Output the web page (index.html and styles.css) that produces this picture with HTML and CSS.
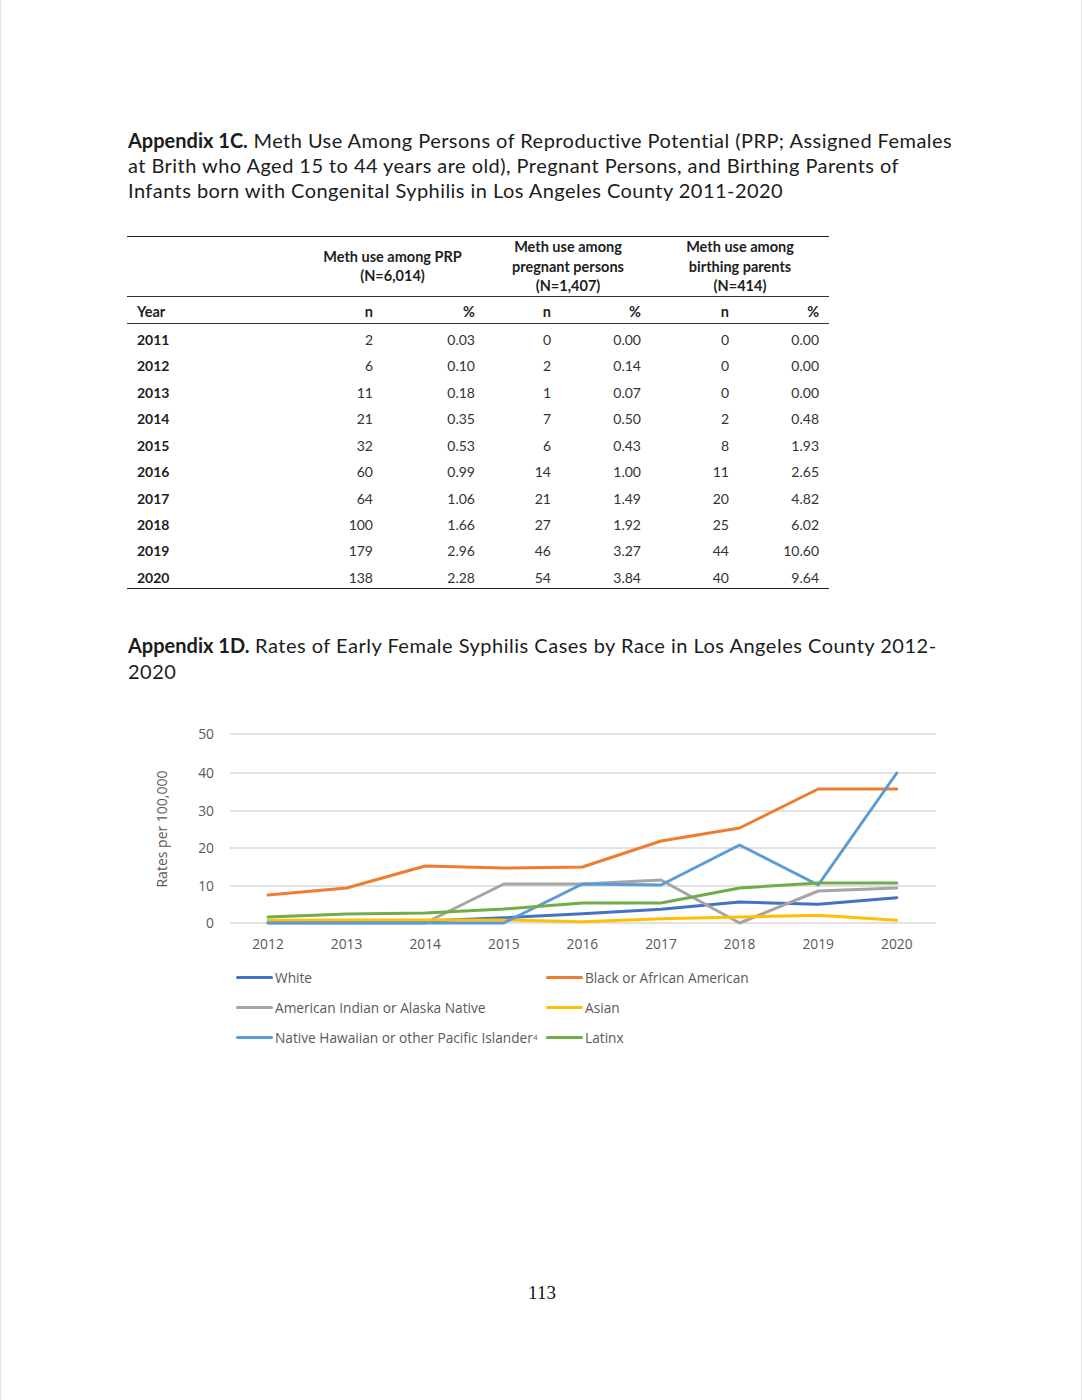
FILE: index.html
```html
<!DOCTYPE html>
<html lang="en">
<head>
<meta charset="utf-8">
<title>Appendix 1C / 1D</title>
<link rel="stylesheet" href="styles.css">
</head>
<body>
<div class="page">
  <h2 class="caption"><b>Appendix 1C.</b> Meth Use Among Persons of Reproductive Potential (PRP; Assigned Females<br>at Brith who Aged 15 to 44 years are old), Pregnant Persons, and Birthing Parents of<br>Infants born with Congenital Syphilis in Los Angeles County 2011-2020</h2>

  <table class="meth">
    <colgroup>
      <col class="c-year"><col class="c-n1"><col class="c-p1"><col class="c-n2"><col class="c-p2"><col class="c-n3"><col class="c-p3">
    </colgroup>
    <thead>
      <tr class="group">
        <th></th>
        <th colspan="2">Meth use among PRP<br>(N=6,014)</th>
        <th colspan="2">Meth use among<br>pregnant persons<br>(N=1,407)</th>
        <th colspan="2">Meth use among<br>birthing parents<br>(N=414)</th>
      </tr>
      <tr class="sub">
        <th class="year">Year</th><th>n</th><th>%</th><th>n</th><th>%</th><th>n</th><th>%</th>
      </tr>
    </thead>
    <tbody>
      <tr><th class="year">2011</th><td>2</td><td>0.03</td><td>0</td><td>0.00</td><td>0</td><td>0.00</td></tr>
      <tr><th class="year">2012</th><td>6</td><td>0.10</td><td>2</td><td>0.14</td><td>0</td><td>0.00</td></tr>
      <tr><th class="year">2013</th><td>11</td><td>0.18</td><td>1</td><td>0.07</td><td>0</td><td>0.00</td></tr>
      <tr><th class="year">2014</th><td>21</td><td>0.35</td><td>7</td><td>0.50</td><td>2</td><td>0.48</td></tr>
      <tr><th class="year">2015</th><td>32</td><td>0.53</td><td>6</td><td>0.43</td><td>8</td><td>1.93</td></tr>
      <tr><th class="year">2016</th><td>60</td><td>0.99</td><td>14</td><td>1.00</td><td>11</td><td>2.65</td></tr>
      <tr><th class="year">2017</th><td>64</td><td>1.06</td><td>21</td><td>1.49</td><td>20</td><td>4.82</td></tr>
      <tr><th class="year">2018</th><td>100</td><td>1.66</td><td>27</td><td>1.92</td><td>25</td><td>6.02</td></tr>
      <tr><th class="year">2019</th><td>179</td><td>2.96</td><td>46</td><td>3.27</td><td>44</td><td>10.60</td></tr>
      <tr><th class="year">2020</th><td>138</td><td>2.28</td><td>54</td><td>3.84</td><td>40</td><td>9.64</td></tr>
    </tbody>
  </table>

  <h2 class="caption caption-d"><b>Appendix 1D.</b> Rates of Early Female Syphilis Cases by Race in Los Angeles County 2012-<br>2020</h2>

  <svg class="chart" width="820" height="240" viewBox="0 0 820 240" xmlns="http://www.w3.org/2000/svg">
    <g class="grid" stroke="#d9d9d9" stroke-width="1.3">
      <line x1="101" y1="13" x2="807" y2="13"/>
      <line x1="101" y1="52" x2="807" y2="52"/>
      <line x1="101" y1="90" x2="807" y2="90"/>
      <line x1="101" y1="127" x2="807" y2="127"/>
      <line x1="101" y1="165" x2="807" y2="165"/>
      <line x1="101" y1="202" x2="807" y2="202"/>
    </g>
    <g class="ylab" text-anchor="end">
      <text x="85" y="18">50</text>
      <text x="85" y="57">40</text>
      <text x="85" y="95">30</text>
      <text x="85" y="132">20</text>
      <text x="85" y="170">10</text>
      <text x="85" y="207">0</text>
    </g>
    <text class="ytitle" transform="translate(38 108) rotate(-90)" text-anchor="middle">Rates per 100,000</text>
    <g class="xlab" text-anchor="middle">
      <text x="139" y="228">2012</text>
      <text x="217.6" y="228">2013</text>
      <text x="296.2" y="228">2014</text>
      <text x="374.8" y="228">2015</text>
      <text x="453.4" y="228">2016</text>
      <text x="532" y="228">2017</text>
      <text x="610.6" y="228">2018</text>
      <text x="689.2" y="228">2019</text>
      <text x="767.8" y="228">2020</text>
    </g>
    <g fill="none" stroke-width="3" stroke-linejoin="round" stroke-linecap="round">
      <polyline stroke="#4472c4" points="139,201.5 217.6,200.5 296.2,200 374.8,196.7 453.4,192.7 532,188.3 610.6,181 689.2,183.3 767.8,176.7"/>
      <polyline stroke="#ed7d31" points="139,174 217.6,167 296.2,145 374.8,147 453.4,146 532,120 610.6,107 689.2,68 767.8,68"/>
      <polyline stroke="#a5a5a5" points="139,202 217.6,202 296.2,202 374.8,163 453.4,163 532,159 610.6,202 689.2,170 767.8,167"/>
      <polyline stroke="#ffc000" points="139,199.3 217.6,199 296.2,199 374.8,199 453.4,200.7 532,197.7 610.6,196 689.2,194.3 767.8,199.3"/>
      <polyline stroke="#5b9bd5" points="139,202 217.6,202 296.2,202 374.8,202 453.4,163 532,164 610.6,124 689.2,164 767.8,52"/>
      <polyline stroke="#70ad47" points="139,196 217.6,193 296.2,192 374.8,188 453.4,182 532,182 610.6,167 689.2,162 767.8,162"/>
    </g>
  </svg>

  <ul class="legend">
    <li><span class="swatch sw-white"></span>White</li>
    <li><span class="swatch sw-black"></span>Black or African American</li>
    <li><span class="swatch sw-aian"></span>American Indian or Alaska Native</li>
    <li><span class="swatch sw-asian"></span>Asian</li>
    <li><span class="swatch sw-nhpi"></span>Native Hawaiian or other Pacific Islander<sup>4</sup></li>
    <li><span class="swatch sw-latinx"></span>Latinx</li>
  </ul>

  <footer class="pagenum">113</footer>
</div>
</body>
</html>
```

FILE: styles.css
```css
html, body {
  margin: 0;
  padding: 0;
  background: #ffffff;
}

.page {
  box-sizing: border-box;
  width: 1082px;
  height: 1400px;
  border-left: 1px solid #e2e2e2;
  border-right: 1px solid #e2e2e2;
  padding: 128px 0 0 126px;
  font-family: Lato, "Open Sans", sans-serif;
  color: #1a1a1a;
  overflow: hidden;
}

.caption {
  margin: 0 0 0 1px;
  width: 900px;
  font-size: 20px;
  font-weight: 400;
  line-height: 25px;
  letter-spacing: 0.45px;
  white-space: nowrap;
  color: #1c1c1c;
}

.caption b {
  font-weight: 700;
  letter-spacing: 0;
}

.caption-d {
  margin-top: 43px;
  line-height: 26px;
  letter-spacing: 0.5px;
}

/* ---------- Table ---------- */
.meth {
  margin-top: 33px;
  width: 702px;
  border-collapse: collapse;
  table-layout: fixed;
  font-size: 14px;
  color: #1e1e1e;
}

.c-year { width: 173px; }
.c-n1 { width: 83px; }
.c-p1 { width: 102px; }
.c-n2 { width: 76px; }
.c-p2 { width: 90px; }
.c-n3 { width: 88px; }
.c-p3 { width: 90px; }

.meth th,
.meth td {
  padding: 0 10px 0 0;
}

.meth .group th {
  border-top: 1px solid #222;
  border-bottom: 1px solid #333;
  font-size: 14.5px;
  font-weight: 700;
  line-height: 19.5px;
  height: 58px;
  text-align: center;
  vertical-align: middle;
  padding: 0;
}

.meth .sub th {
  border-bottom: 1px solid #333;
  font-size: 14.5px;
  font-weight: 700;
  line-height: 17px;
  height: 26px;
  box-sizing: border-box;
  padding-top: 6px;
  padding-bottom: 3px;
  text-align: right;
  vertical-align: bottom;
}

.meth .sub th.year,
.meth tbody th.year {
  text-align: left;
  padding-left: 10px;
}

.meth tbody th,
.meth tbody td {
  line-height: 17px;
  padding-top: 7.44px;
  padding-bottom: 2px;
  vertical-align: bottom;
  text-align: right;
}

.meth tbody th {
  font-weight: 700;
}

.meth tbody td {
  font-weight: 400;
  color: #333;
}

.meth tbody tr:last-child th,
.meth tbody tr:last-child td {
  border-bottom: 1.5px solid #222;
}

/* ---------- Chart ---------- */
.chart {
  display: block;
  margin-top: 37px;
  margin-left: 2px;
  font-family: "Open Sans", Lato, sans-serif;
}

.ylab text,
.xlab text {
  font-size: 13.8px;
  fill: #595959;
}

.ytitle {
  font-size: 14px;
  fill: #595959;
}

.legend {
  list-style: none;
  margin: 2px 0 0 109px;
  padding: 0;
  display: grid;
  grid-template-columns: 310px 300px;
  grid-auto-rows: 30px;
  font-family: "Open Sans", Lato, sans-serif;
  font-size: 13.7px;
  color: #595959;
}

.legend li {
  display: flex;
  align-items: center;
  white-space: nowrap;
}

.legend sup {
  font-size: 8px;
  line-height: 0;
  position: relative;
  top: -1px;
  vertical-align: super;
}

.swatch {
  display: inline-block;
  width: 37px;
  height: 3px;
  border-radius: 2px;
  margin-right: 2px;
}

.sw-white { background: #4472c4; }
.sw-black { background: #ed7d31; }
.sw-aian { background: #a5a5a5; }
.sw-asian { background: #ffc000; }
.sw-nhpi { background: #5b9bd5; }
.sw-latinx { background: #70ad47; }

.pagenum {
  margin-top: 228px;
  width: 830px;
  text-align: center;
  font-family: "Liberation Serif", "Times New Roman", serif;
  font-size: 19px;
  line-height: 24px;
  color: #111;
}
```
